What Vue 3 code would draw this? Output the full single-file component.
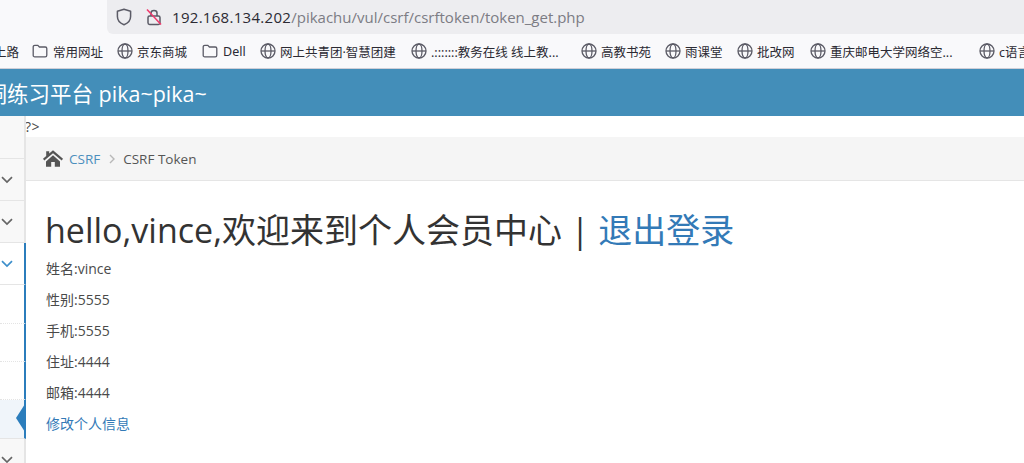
<template>
  <div class="page">
    <div class="addr-row">
      <div class="addr-bar">
        <svg class="shield" viewBox="0 0 16 18" width="16" height="18" aria-hidden="true">
          <path d="M8 1.2 L14.6 3.2 V8.6 C14.6 12.6 11.8 15.4 8 16.8 C4.2 15.4 1.4 12.6 1.4 8.6 V3.2 Z" fill="none" stroke="#5b5b66" stroke-width="1.5" stroke-linejoin="round" />
        </svg>
        <svg class="lock" viewBox="0 0 16 18" width="16" height="18" aria-hidden="true">
          <path d="M5 8 V5 C5 1.6 11 1.6 11 5 V8" fill="none" stroke="#5b5b66" stroke-width="1.5" />
          <rect x="2" y="8" width="12" height="8.4" rx="1.6" fill="none" stroke="#5b5b66" stroke-width="1.5" />
          <path d="M1 1.5 L15 16.5" stroke="#f0386b" stroke-width="1.5" />
        </svg>
        <span class="url"><span class="host">192.168.134.202</span>/pikachu/vul/csrf/csrftoken/token_get.php</span>
      </div>
    </div>

    <div class="bookmarks">
      <span class="cut">上路</span>
      <span v-for="b in bookmarks" :key="b.label" class="bm" :style="{ width: b.w + 'px' }">
        <svg v-if="b.folder" class="folder" viewBox="0 0 16 16" width="16" height="16" aria-hidden="true">
          <path d="M1.2 4 C1.2 3 1.8 2.4 2.8 2.4 H5.8 L7.4 4 H13.2 C14.2 4 14.8 4.6 14.8 5.6 V12.2 C14.8 13.2 14.2 13.8 13.2 13.8 H2.8 C1.8 13.8 1.2 13.2 1.2 12.2 Z" fill="none" stroke="#5b5b66" stroke-width="1.3" />
        </svg>
        <svg v-else viewBox="0 0 16 16" width="16" height="16" aria-hidden="true">
          <g fill="none" stroke="#5b5b66" stroke-width="1.3">
            <circle cx="8" cy="8" r="7" />
            <ellipse cx="8" cy="8" rx="3" ry="7" />
            <path d="M1 8 H15" />
          </g>
        </svg>
        <span class="bm-text">{{ b.label }}</span>
      </span>
    </div>

    <header class="topbar"><span class="brand">漏洞练习平台 pika~pika~</span></header>

    <div class="body">
      <aside class="sidebar">
        <div v-for="(r, i) in rows" :key="i" :class="['row', r.cls]" :style="{ height: r.h + 'px' }">
          <svg v-if="r.chev" viewBox="0 0 12 8" width="12" height="8" aria-hidden="true">
            <path d="M1 1.2 L6 6 L11 1.2" fill="none" :stroke="r.cls === 'open' ? '#3d8fcb' : '#666'" stroke-width="1.7" />
          </svg>
          <i v-if="r.cls === 'active'" class="pointer"></i>
        </div>
      </aside>

      <main class="main">
        <div class="stray">?&gt;</div>
        <div class="crumbs">
          <svg viewBox="0 0 20 17" width="20" height="17" aria-hidden="true">
            <path d="M10 .2 L20 8.8 L18.7 10.6 L10 3.2 L1.3 10.6 L0 8.8 L3.2 6 V1.2 H6.2 V3.5 Z M3 11.4 L10 5.2 L17 11.4 V16.8 H11.8 V12 H8.2 V16.8 H3 Z" fill="#555" />
          </svg>
          <a class="crumb-link">CSRF</a>
          <svg viewBox="0 0 6 10" width="6" height="10" aria-hidden="true">
            <path d="M1 1 L5 5 L1 9" fill="none" stroke="#b8b8b8" stroke-width="1.4" />
          </svg>
          <span class="crumb-now">CSRF Token</span>
        </div>
        <div class="content">
          <h1 class="title">hello,vince,欢迎来到个人会员中心 | <a>退出登录</a></h1>
          <p v-for="line in info" :key="line">{{ line }}</p>
          <a class="edit">修改个人信息</a>
        </div>
      </main>
    </div>
  </div>
</template>

<script setup>
const bookmarks = [
  { label: '常用网址', folder: true, w: 85 },
  { label: '京东商城', w: 85 },
  { label: 'Dell', folder: true, w: 58 },
  { label: '网上共青团·智慧团建', w: 151 },
  { label: '.:::::::教务在线 线上教...', w: 170 },
  { label: '高教书苑', w: 84 },
  { label: '雨课堂', w: 72 },
  { label: '批改网', w: 73 },
  { label: '重庆邮电大学网络空...', w: 169 },
  { label: 'c语言', w: 60 }
]

const rows = [
  { h: 43 },
  { h: 42, chev: true },
  { h: 42, chev: true },
  { h: 42, chev: true, cls: 'open' },
  { h: 39, cls: 'sub' },
  { h: 38, cls: 'sub' },
  { h: 38, cls: 'sub' },
  { h: 39, cls: 'active' },
  { h: 42, chev: true }
]

const info = ['姓名:vince', '性别:5555', '手机:5555', '住址:4444', '邮箱:4444']
</script>

<style>
html,
body {
  margin: 0;
  overflow: hidden;
  background: #fff;
}
</style>

<style scoped>
.page {
  width: 1024px;
  height: 463px;
  overflow: hidden;
  font-family: "Open Sans", "Noto Sans CJK SC", sans-serif;
  font-size: 14px;
  color: #4a4a4a;
}

.addr-row {
  height: 34px;
  padding-left: 107px;
  background: #f9f9fb;
}

.addr-bar {
  height: 34px;
  display: flex;
  align-items: center;
  background: #ededf0;
  border-radius: 0 0 0 6px;
  padding-left: 9px;
  font-family: "Open Sans", "Noto Sans", sans-serif;
}

.lock {
  margin-left: 14px;
}

.url {
  margin-left: 10px;
  font-size: 15px;
  color: #7c7c84;
  white-space: nowrap;
}

.host {
  color: #2b2a33;
  letter-spacing: 0.3px;
}

.bookmarks {
  height: 34px;
  display: flex;
  align-items: center;
  background: #f9f9fb;
  border-bottom: 1px solid #cfcfd8;
  font-family: "Noto Sans", "Noto Sans CJK SC", sans-serif;
  font-size: 12.5px;
  color: #2b2a33;
  white-space: nowrap;
  overflow: hidden;
}

.cut {
  width: 26px;
  flex: none;
  margin-left: -6px;
  padding-right: 12px;
  box-sizing: content-box;
}

.bm {
  flex: none;
  display: flex;
  align-items: center;
  gap: 4px;
}

.folder {
  margin-right: 1px;
}

.topbar {
  height: 47px;
  display: flex;
  align-items: center;
  background: #438eb9;
  color: #fff;
  font-size: 21.5px;
  white-space: nowrap;
  overflow: hidden;
}

.brand {
  margin-left: -36px;
}

.body {
  display: flex;
  height: 347px;
  overflow: hidden;
}

.sidebar {
  width: 26px;
  flex: none;
  background: #f2f2f2;
}

.row {
  display: flex;
  align-items: center;
  position: relative;
  padding-left: 1px;
  box-sizing: border-box;
  background: #f8f8f8;
  border-bottom: 1px solid #e5e5e5;
  border-right: 2px solid #e5e5e5;
}

.row.open,
.row.sub {
  background: #fff;
  border-right-color: #2b7dbc;
}

.row.sub {
  border-bottom: 1px dotted #e4e4e4;
}

.row.active {
  background: #f0f5fa;
  border-right-color: #2b7dbc;
}

.pointer {
  position: absolute;
  right: -1px;
  top: 4px;
  width: 9px;
  height: 28px;
  background: #2b7dbc;
  clip-path: polygon(0 50%, 100% 0, 100% 100%);
}

.main {
  flex: 1;
  min-width: 0;
  background: #fff;
}

.stray {
  height: 21px;
  line-height: 21px;
  margin-left: -1px;
  font-size: 14px;
  letter-spacing: 0.5px;
}

.crumbs {
  height: 44px;
  display: flex;
  align-items: center;
  padding-left: 17px;
  box-sizing: border-box;
  background: #f5f5f5;
  border-bottom: 1px solid #e5e5e5;
  font-size: 13.5px;
}

.crumb-link {
  margin-left: 6px;
  color: #4c8fbd;
}

.crumbs svg + .crumb-link + svg {
  margin: 0 8px 0 9px;
}

.crumb-now {
  color: #555;
}

.content {
  padding: 26px 0 0 20px;
}

.title {
  margin: 0 0 7px -1px;
  font-size: 34px;
  line-height: 46px;
  font-weight: 400;
  white-space: nowrap;
  color: #333;
}

.title a {
  color: #337ab7;
}

.content p {
  margin: 0 0 13px;
  height: 18px;
  line-height: 18px;
}

.edit {
  display: block;
  line-height: 18px;
  color: #337ab7;
}
</style>
